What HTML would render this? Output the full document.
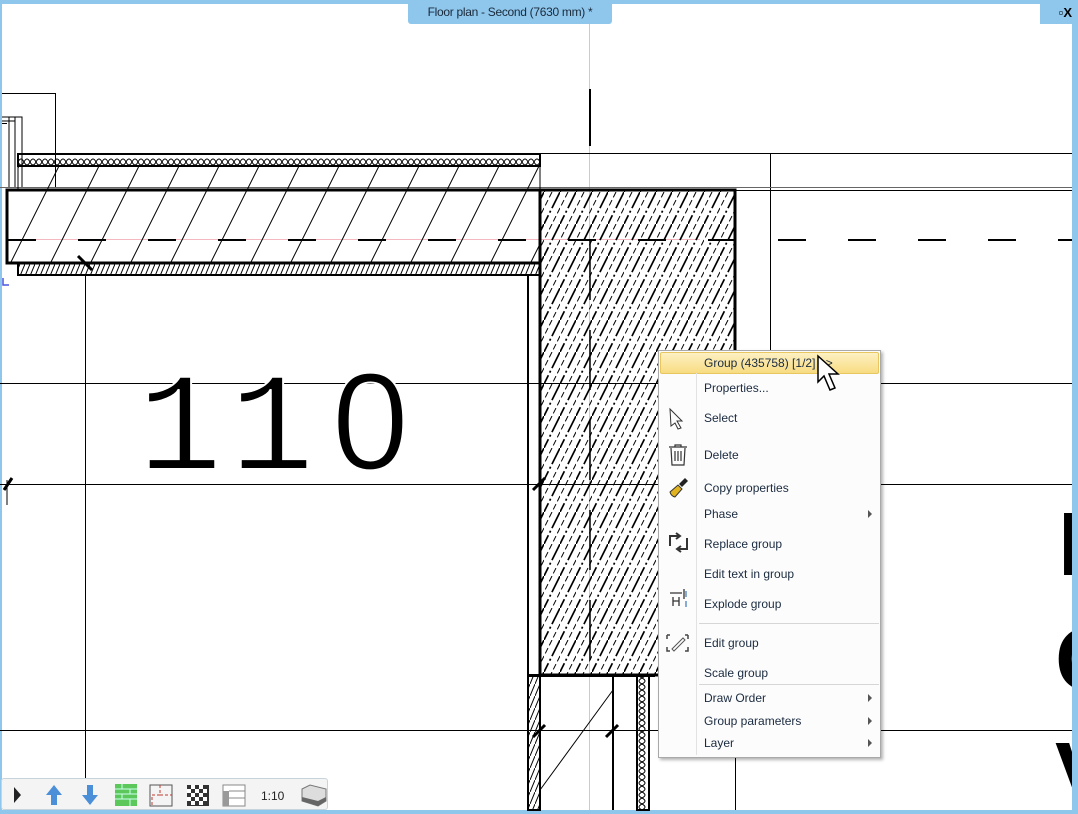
<!DOCTYPE html>
<html><head><meta charset="utf-8">
<style>
html,body{margin:0;padding:0;}
body{width:1078px;height:814px;overflow:hidden;position:relative;background:#fff;font-family:"Liberation Sans",sans-serif;}
svg{position:absolute;left:0;top:0;}
.tab{position:absolute;left:408px;top:4px;width:204px;height:20px;background:#8fc6ec;border-radius:0 0 3px 3px;font-size:12px;color:#1a2a3a;text-align:center;line-height:17px;letter-spacing:-0.3px;}
.ctrl{position:absolute;left:1040px;top:4px;width:34px;height:20px;background:#8fc6ec;font-size:13px;font-weight:bold;line-height:17px;text-align:right;padding-right:2px;box-sizing:border-box;}
.menu{position:absolute;left:658px;top:350px;width:221px;height:406px;background:#fcfcfc;border:1px solid #a9a9a9;box-shadow:2px 2px 3px rgba(0,0,0,.3);font-size:12px;color:#1b2b40;}
.menu .col{position:absolute;left:37px;top:22px;bottom:2px;width:1px;background:#e2e2e2;}
.menu .it{position:absolute;left:45px;white-space:nowrap;}
.menu .hl{position:absolute;left:1px;top:1px;width:217px;height:20px;border:1px solid #e8c660;border-radius:2px;background:linear-gradient(#fdf1c3,#f8dc82);}
.menu .sep{position:absolute;left:40px;right:1px;height:1px;background:#d6d6d6;}
.menu .ar{position:absolute;left:209px;width:0;height:0;border-left:4px solid #555;border-top:4px solid transparent;border-bottom:4px solid transparent;}
.tb{position:absolute;left:1px;top:778px;width:327px;height:32px;background:#f4f4f4;border:1px solid #c8d4dc;border-radius:3px;box-sizing:border-box;}
</style></head><body>
<svg width="1078" height="814" viewBox="0 0 1078 814">
<defs>
<pattern id="h1" width="40" height="80" patternUnits="userSpaceOnUse" patternTransform="translate(7,190)">
<line x1="40" y1="0" x2="0" y2="80" stroke="#000" stroke-width="1"/>
</pattern>
<pattern id="h2" width="5" height="12" patternUnits="userSpaceOnUse">
<line x1="5" y1="0" x2="0" y2="12" stroke="#000" stroke-width="1"/>
</pattern>
<pattern id="xx" width="6" height="12" patternUnits="userSpaceOnUse">
<path d="M0 6 Q3 0 6 6 Q3 12 0 6" fill="none" stroke="#000" stroke-width="1"/>
</pattern>
<pattern id="wh" width="16" height="32" patternUnits="userSpaceOnUse">
<line x1="16" y1="0" x2="0" y2="32" stroke="#000" stroke-width="1.7" stroke-dasharray="18 3 2 3"/>
<line x1="8" y1="0" x2="0" y2="16" stroke="#000" stroke-width="1" stroke-dasharray="6 3"/>
<line x1="16" y1="16" x2="8" y2="32" stroke="#000" stroke-width="1" stroke-dasharray="6 3"/>
</pattern>
<pattern id="xx2" width="12" height="6" patternUnits="userSpaceOnUse">
<path d="M6 0 Q0 3 6 6 Q12 3 6 0" fill="none" stroke="#000" stroke-width="1"/>
</pattern>
</defs>
<rect x="0" y="0" width="1078" height="4" fill="#8fc6ec"/>
<rect x="0" y="0" width="2" height="814" fill="#8fc6ec"/>
<rect x="0" y="810" width="1078" height="4" fill="#8fc6ec"/>
<line x1="589.5" y1="24" x2="589.5" y2="810" stroke="#f4b8c0" stroke-width="1"/>
<line x1="15" y1="239.5" x2="700" y2="239.5" stroke="#f4b8c0" stroke-width="1"/>
<g stroke="#000" fill="none">
<path d="M2 93.5H55.5V187M2 117H22V187M2 121H15M2 123.5H7" stroke-width="1"/>
<path d="M9 117V187M15 117V187" stroke-width="1"/>
<line x1="590" y1="89" x2="590" y2="146" stroke-width="2"/>
<line x1="540" y1="153.5" x2="1072" y2="153.5"/>
<line x1="770.5" y1="153" x2="770.5" y2="350"/>
<line x1="0" y1="187.5" x2="1072" y2="187.5" stroke="#666"/>
<line x1="735" y1="190.5" x2="1072" y2="190.5"/>
<rect x="18" y="154" width="522" height="12" fill="url(#xx)" stroke-width="2"/>
<rect x="18" y="166" width="522" height="24" fill="url(#h1)" stroke-width="1"/>
<rect x="7" y="190" width="533" height="73" fill="url(#h1)" stroke-width="3"/>
<rect x="18" y="263" width="522" height="12" fill="url(#h2)" stroke-width="2"/>
<line x1="0" y1="240" x2="1072" y2="240" stroke-width="2" stroke-dasharray="28 42" stroke-dashoffset="-8"/>
<line x1="78" y1="256" x2="92" y2="270" stroke-width="3"/>
<rect x="540" y="190" width="195" height="485" fill="url(#wh)" stroke-width="3"/>
<line x1="590" y1="240" x2="590" y2="675" stroke-width="1.5" stroke-dasharray="60 30"/>
<line x1="528" y1="275" x2="528" y2="810" stroke-width="2"/>
<line x1="85.5" y1="275" x2="85.5" y2="780"/>
<line x1="735.5" y1="675" x2="735.5" y2="810"/>
<line x1="0" y1="383.5" x2="1072" y2="383.5"/>
<line x1="0" y1="484.5" x2="1072" y2="484.5"/>
<line x1="0" y1="730.5" x2="1072" y2="730.5"/>
<line x1="4" y1="490" x2="12" y2="478" stroke-width="3"/>
<line x1="7" y1="480" x2="7" y2="505"/>
<line x1="533" y1="490" x2="545" y2="478" stroke-width="3"/>
<rect x="528" y="675" width="12" height="135" fill="url(#h2)" stroke-width="2"/>
<line x1="528" y1="675.5" x2="655" y2="675.5" stroke-width="3"/>
<line x1="613" y1="675" x2="613" y2="810" stroke-width="2"/>
<line x1="540" y1="790" x2="613" y2="690"/>
<rect x="637" y="676" width="12" height="134" fill="url(#xx2)" stroke-width="2"/>
<line x1="533" y1="737" x2="545" y2="725" stroke-width="3"/>
<line x1="606" y1="737" x2="618" y2="725" stroke-width="3"/>
</g>
<path d="M3 278V285H9" stroke="#4a55e0" fill="none" stroke-width="1.5"/>
<text x="138" y="469" font-family="Liberation Mono,monospace" font-size="140" letter-spacing="8" fill="#000" stroke="#fff" stroke-width="2">11<tspan x="332" font-family="Liberation Sans,sans-serif" font-size="138">0</tspan></text>
<text x="1058" y="575" font-family="Liberation Sans,sans-serif" font-size="90" font-weight="bold" fill="#000">L</text>
<text x="1055" y="690" font-family="Liberation Sans,sans-serif" font-size="90" font-weight="bold" fill="#000">G</text>
<text x="1055" y="805" font-family="Liberation Sans,sans-serif" font-size="90" font-weight="bold" fill="#000">V</text>
<rect x="1072" y="0" width="6" height="814" fill="#8fc6ec"/>
</svg>
<div class="tab">Floor plan - Second (7630 mm) *</div>
<div class="ctrl">▫X</div>

<div class="menu">
<div class="hl"></div>
<div class="col"></div>
<div class="it" style="top:5px">Group (435758) [1/2] &gt;&gt;</div>
<div class="it" style="top:30px">Properties...</div>
<div class="it" style="top:60px">Select</div>
<div class="it" style="top:97px">Delete</div>
<div class="it" style="top:130px">Copy properties</div>
<div class="it" style="top:156px">Phase</div><div class="ar" style="top:159px"></div>
<div class="it" style="top:186px">Replace group</div>
<div class="it" style="top:216px">Edit text in group</div>
<div class="it" style="top:246px">Explode group</div>
<div class="sep" style="top:272px"></div>
<div class="it" style="top:285px">Edit group</div>
<div class="it" style="top:315px">Scale group</div>
<div class="sep" style="top:333px"></div>
<div class="it" style="top:340px">Draw Order</div><div class="ar" style="top:343px"></div>
<div class="it" style="top:363px">Group parameters</div><div class="ar" style="top:366px"></div>
<div class="it" style="top:385px">Layer</div><div class="ar" style="top:388px"></div>
<svg width="40" height="406" style="left:0;top:0">
<path d="M11 58L23 70L18 70L22 77L19 78L16 72L12 75Z" fill="none" stroke="#333" stroke-width="1"/>
<path d="M10 96H28M16 96V94H22V96M12 97L13 114H25L26 97M16 100V110M19 100V110M22 100V110" fill="none" stroke="#333" stroke-width="1.2"/>
<path d="M20 133L26 127L29 130L23 136Z" fill="#222"/><path d="M11 141L19 134L23 138L16 146Q12 145 11 141Z" fill="#e2b320" stroke="#333"/>
<path d="M11 195V185H20M17 182L21 185L17 188M28 187V198H19M22 195L18 198L22 201" fill="none" stroke="#333" stroke-width="2"/>
<path d="M11 242H23M14 246V255M20 246V255M14 250H20M25 238V248" fill="none" stroke="#333" stroke-width="1.3"/><path d="M27 240V246M27 250V256" stroke="#4a7fc0" stroke-width="1.3"/>
<path d="M8 284V288M8 296V300H11M29 284V288M29 296V300H26M8 284H11M29 284H26" fill="none" stroke="#444" stroke-width="1.5"/><path d="M13 298L24 287L26 289L15 300Z" fill="none" stroke="#555"/>
</svg>
</div>
<svg width="30" height="40" style="left:816px;top:354px">
<path d="M2 2L2 28L8 22L14 36L19 34L13 20L22 20Z" fill="#fff" stroke="#000" stroke-width="1.5"/>
</svg>

<div class="tb">
<svg width="327" height="32" style="left:0;top:0">
<path d="M12 8L19 16L12 24Z" fill="#222"/>
<path d="M52 6L44 16H49V26H55V16H60Z" fill="#4a8fd8"/>
<path d="M85 6V16H80L88 26L96 16H91V6Z" fill="#4a8fd8"/>
<rect x="113" y="5" width="22" height="22" fill="#5cc85c"/>
<path d="M113 10H135M113 15H135M113 20H135M120 5V10M128 10V15M120 15V20M128 20V27" stroke="#cfe" stroke-width="1"/>
<rect x="148" y="6" width="22" height="21" fill="none" stroke="#555"/>
<path d="M158 6V16H150V27M158 16H170" fill="none" stroke="#c0392b" stroke-dasharray="3 2"/>
<g fill="#333"><rect x="185" y="6" width="22" height="21"/></g>
<g fill="#fff"><rect x="189" y="6" width="4" height="4"/><rect x="197" y="6" width="4" height="4"/><rect x="185" y="10" width="4" height="4"/><rect x="193" y="10" width="4" height="4"/><rect x="201" y="10" width="4" height="4"/><rect x="189" y="14" width="4" height="4"/><rect x="197" y="14" width="4" height="4"/><rect x="185" y="18" width="4" height="4"/><rect x="193" y="18" width="4" height="4"/><rect x="201" y="18" width="4" height="4"/><rect x="189" y="22" width="4" height="4"/><rect x="197" y="22" width="4" height="4"/></g>
<rect x="221" y="6" width="22" height="21" fill="#fff" stroke="#888"/>
<rect x="221" y="12" width="6" height="15" fill="#999"/>
<path d="M227 12H243M227 19H243" stroke="#888"/>
<text x="259" y="21" font-size="12" font-family="Liberation Sans,sans-serif" fill="#222">1:10</text>
<path d="M300 10L308 6L324 10V22L316 27L300 22Z" fill="#ddd" stroke="#777"/>
<path d="M300 18L316 22L324 18V22L316 27L300 22Z" fill="#666"/>
</svg>
</div>
</body></html>
